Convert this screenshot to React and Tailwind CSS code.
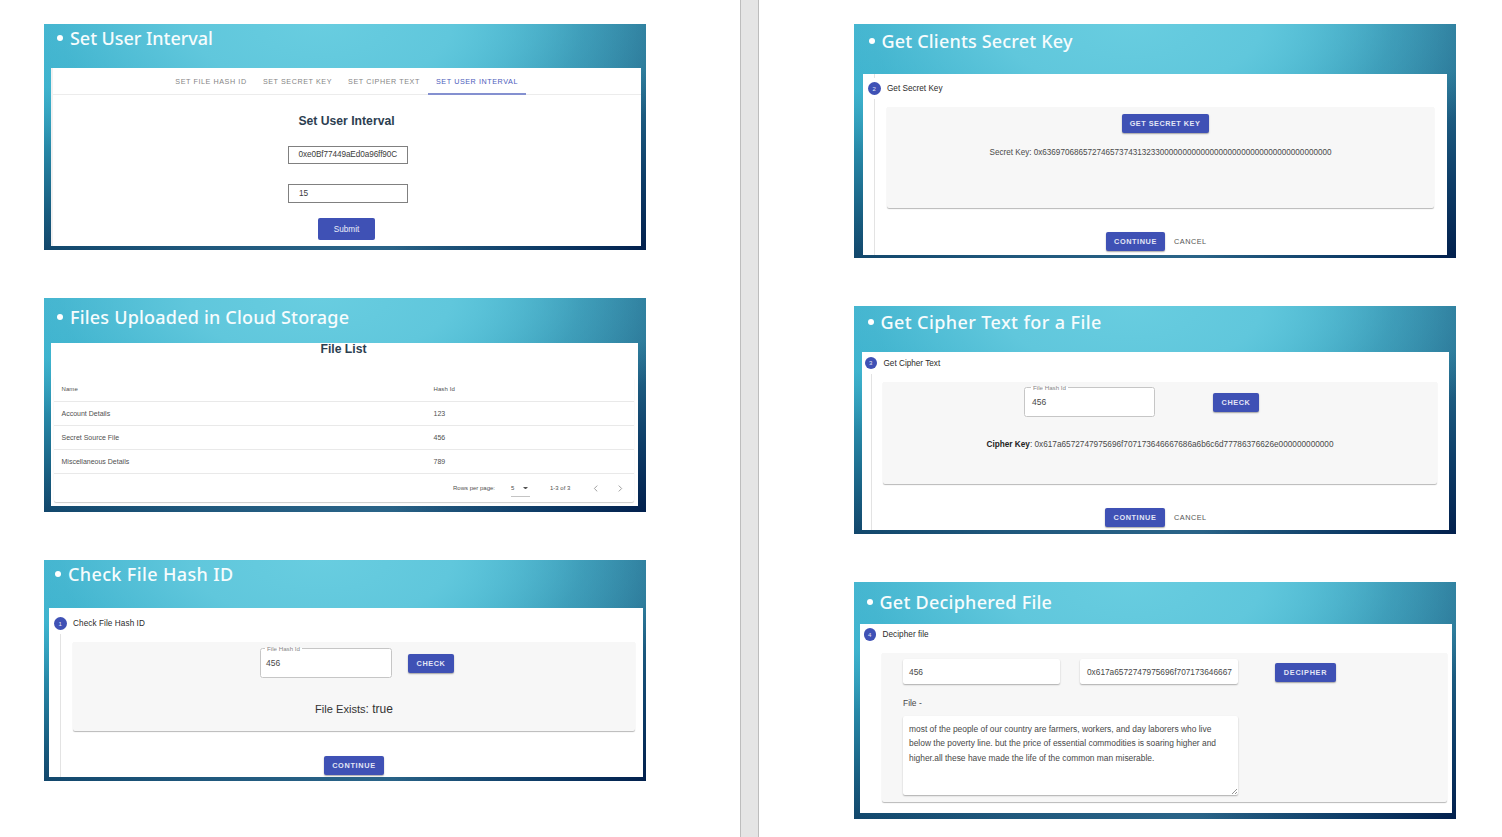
import React from "react";

const slideBg =
  "bg-[radial-gradient(ellipse_62%_80%_at_46%_0%,#68cde0_0%,#60c7dc_35%,#58bed566_70%,transparent_100%),radial-gradient(ellipse_42%_80%_at_100%_100%,#02204d_0%,#07305dcc_40%,transparent_100%),radial-gradient(ellipse_60%_40%_at_55%_100%,#2a6488_0%,#2a648899_50%,transparent_100%),linear-gradient(100deg,transparent_62%,#276f90_97%),linear-gradient(to_bottom,#3cb2ce_0%,#35b0cc_28%,#2480a0_60%,#0f4368_100%)]";

function Slide({ title, height, titleClass, panelClass, children }) {
  return (
    <section className={`${slideBg} ${height} flex w-[602px] shrink-0 flex-col overflow-hidden`}>
      <h2 className={`flex items-center whitespace-nowrap font-['Noto_Sans',sans-serif] text-[18px] font-medium leading-none text-[#f6fcfd] ${titleClass}`}>
        <span className="mr-[7px] size-[6px] rounded-full bg-white" />
        {title}
      </h2>
      <div className={`flex shrink-0 flex-col overflow-hidden bg-white ${panelClass}`}>{children}</div>
    </section>
  );
}

function Button({ className = "", children }) {
  return (
    <button
      className={`flex h-[19px] shrink-0 items-center justify-center whitespace-nowrap rounded-[2px] bg-[#3f51b5] text-[7.3px] font-bold leading-none text-[#e3e6f5] shadow-[0_1px_1.5px_rgba(0,0,0,0.35)] ${className}`}
    >
      {children}
    </button>
  );
}

function Step({ n, label, className = "" }) {
  return (
    <div className={`flex h-[13px] shrink-0 items-center text-[8.2px] leading-none text-[#2b2b2b] ${className}`}>
      <span className="mr-[6.5px] flex size-[12.5px] items-center justify-center rounded-full bg-[#3f51b5] text-[6px] text-[#e4e7f6]">{n}</span>
      <span className="pt-[1.5px]">{label}</span>
    </div>
  );
}

const card = "shrink-0 rounded-b-[2px] bg-[#f7f7f7] shadow-[0_1px_1px_rgba(0,0,0,0.28)]";
const field = "rounded-[2px] bg-white shadow-[0_1px_1.5px_rgba(0,0,0,0.3)]";

function HashField({ className }) {
  return (
    <fieldset className={`shrink-0 rounded-[2.5px] border border-[#c6c6c6] bg-white px-[5px] ${className}`}>
      <legend className="-ml-px h-[4px] px-[2px] text-[6.2px] leading-[6px] text-[#858585]">
        File Hash Id
      </legend>
      <div className="pt-[8px] text-[8.5px] leading-[10px] text-[#484848]">456</div>
    </fieldset>
  );
}

function Tabs() {
  return (
    <div className="flex h-[27px] shrink-0 border-b border-[#ececec] pl-[114px] text-[7.2px] leading-[28px] tracking-[0.57px] text-[#858585]">
      <div className="w-[88px] text-center">SET FILE HASH ID</div>
      <div className="w-[85px] text-center">SET SECRET KEY</div>
      <div className="w-[88px] text-center">SET CIPHER TEXT</div>
      <div className="h-[27px] w-[98px] border-b-2 border-[#8490d0] text-center text-[#4d5cbb]">SET USER INTERVAL</div>
    </div>
  );
}

const rows = [
  ["Account Details", "123"],
  ["Secret Source File", "456"],
  ["Miscellaneous Details", "789"],
];

function FileTable() {
  return (
    <div className="ml-[3px] mt-[20px] flex h-[125px] w-[580px] shrink-0 flex-col rounded-[2px] text-[7px] text-[#505050] shadow-[0_1px_1px_rgba(0,0,0,0.2)]">
      <div className="flex h-[24.5px] shrink-0 items-center border-b border-[#e9e9e9] pl-[7.5px] pt-[1.5px] text-[6px] font-medium">
        <span className="w-[372px] tracking-[0.1px]">Name</span>
        <span className="tracking-[0.1px]">Hash Id</span>
      </div>
      {rows.map(([name, id]) => (
        <div key={id} className="flex h-[24.2px] shrink-0 items-center border-b border-[#e9e9e9] pl-[7.5px] pt-[1.5px]">
          <span className="w-[372px]">{name}</span>
          <span>{id}</span>
        </div>
      ))}
      <div className="flex h-[28px] items-center pl-[399px] pt-[1px] text-[6px]">
        <span className="w-[58px]">Rows per page:</span>
        <span className="flex h-[17px] w-[19px] items-center justify-between border-b border-[#c4c4c4] pr-[2.5px]">
          5
          <svg viewBox="0 0 6 3" className="h-[2.5px] w-[5px] fill-[#555]"><path d="M0 0h6L3 3z" /></svg>
        </span>
        <span className="ml-[20px] w-[43px]">1-3 of 3</span>
        <svg viewBox="0 0 4 6" className="h-[7px] w-[5px] fill-none stroke-[#999] stroke-[0.8]"><path d="M3.5.5 1 3l2.5 2.5" /></svg>
        <svg viewBox="0 0 4 6" className="ml-[20px] h-[7px] w-[5px] fill-none stroke-[#999] stroke-[0.8]"><path d="M.5.5 3 3 .5 5.5" /></svg>
      </div>
    </div>
  );
}

export default function App() {
  return (
    <div className="flex h-[837px] w-[1502px] overflow-hidden bg-white font-['Liberation_Sans',Arial,sans-serif]">
      <main className="flex w-[740px] shrink-0 flex-col gap-[48px] pl-[44px] pt-[24px]">
        <Slide title="Set User Interval" height="h-[226px]" titleClass="h-[44px] pb-[17px] pl-[13px] tracking-[-0.05px]" panelClass="ml-[7px] h-[178px] w-[590px] border-l-2 border-[#f1f1f1]">
          <Tabs />
          <h3 className="mt-[20px] pr-px text-center text-[12.2px] font-bold leading-[13px] text-[#2c3e50]">Set User Interval</h3>
          <div className="ml-[235px] mt-[18px] flex h-[18px] w-[120px] shrink-0 items-center whitespace-nowrap border border-[#808080] px-[9.5px] text-[8.2px] tracking-[-0.08px] text-[#3c3c3c]">
            0xe0Bf77449aEd0a96ff90C
          </div>
          <div className="ml-[235px] mt-[20px] flex h-[19px] w-[120px] shrink-0 items-center border border-[#808080] px-[10px] text-[8.3px] text-[#3c3c3c]">15</div>
          <div className="ml-[265px] mt-[15px] flex h-[22px] w-[57px] shrink-0 items-center justify-center rounded-[2px] bg-[#3f51b5] pt-[2px] text-[8.2px] text-[#eceefa]">Submit</div>
        </Slide>

        <Slide title="Files Uploaded in Cloud Storage" height="h-[214px]" titleClass="h-[45px] pb-[8px] pl-[13px] tracking-[0.2px]" panelClass="ml-[7px] h-[163px] w-[587px]">
          <h3 className="h-[14px] shrink-0 pr-[2px] text-center text-[12.2px] font-bold leading-[13px] text-[#2c3e50]">File List</h3>
          <FileTable />
        </Slide>

        <Slide title="Check File Hash ID" height="h-[221px]" titleClass="h-[48px] pb-[21px] pl-[11px] tracking-[0.37px]" panelClass="ml-[5px] h-[169px] w-[594px]">
          <Step n="1" label="Check File Hash ID" className="ml-[5px] mt-[9px] tracking-[0.08px]" />
          <div className="ml-[11px] mt-[4px] flex h-[143px] shrink-0 flex-col border-l border-[#e3e3e3] pl-[12px]">
            <div className={`${card} mt-[8px] h-[89px] w-[562px]`}>
              <div className="flex pl-[187px] pt-[4px]">
                <HashField className="h-[32px] w-[132px]" />
                <Button className="ml-[16px] mt-[8px] w-[46px] tracking-[0.6px]">CHECK</Button>
              </div>
              <p className="mt-[24px] text-center text-[11.1px] leading-[14px] text-[#333]">
                File Exists<span className="text-[12px]">: true</span>
              </p>
            </div>
            <Button className="ml-[251px] mt-[25px] w-[60px] tracking-[0.7px]">CONTINUE</Button>
          </div>
        </Slide>
      </main>

      <div className="w-[19px] shrink-0 border-x border-[#bdbdbd] bg-[#e5e5e5]" />

      <main className="flex w-[743px] shrink-0 flex-col gap-[48px] pl-[95px] pt-[24px]">
        <Slide title="Get Clients Secret Key" height="h-[234px]" titleClass="h-[50px] pb-[16px] pl-[14.5px] tracking-[0.18px]" panelClass="ml-[9px] h-[181px] w-[584px]">
          <div className="ml-[11px] h-[4px] w-px shrink-0 bg-[#e3e3e3]" />
          <Step n="2" label="Get Secret Key" className="ml-[5px] mt-[4px]" />
          <div className="ml-[11px] mt-[4px] flex h-[160px] shrink-0 flex-col border-l border-[#e3e3e3] pl-[12px]">
            <div className={`${card} mt-[8px] flex h-[101px] w-[547px] flex-col items-center`}>
              <Button className="ml-[9px] mt-[7px] w-[87px] tracking-[0.5px]">GET SECRET KEY</Button>
              <p className="mt-[14px] whitespace-nowrap text-[8.13px] leading-[12px] text-[#4a4a4a]">
                Secret Key: 0x6369706865727465737431323300000000000000000000000000000000000000
              </p>
            </div>
            <div className="mt-[24px] flex items-center pl-[219px]">
              <Button className="w-[59px] tracking-[0.6px]">CONTINUE</Button>
              <span className="ml-[9px] text-[7.3px] leading-none tracking-[0.5px] text-[#555]">CANCEL</span>
            </div>
          </div>
        </Slide>

        <Slide title="Get Cipher Text for a File" height="h-[228px]" titleClass="h-[46px] pb-[14px] pl-[13.5px] tracking-[0.4px]" panelClass="ml-[8px] h-[178px] w-[587px]">
          <Step n="3" label="Get Cipher Text" className="ml-[2.5px] mt-[4.5px]" />
          <div className="ml-[8.5px] mt-[4.5px] flex h-[160px] shrink-0 flex-col border-l border-[#e3e3e3] pl-[11.5px]">
            <div className={`${card} mt-[8px] h-[102px] w-[554px]`}>
              <div className="flex pl-[141px] pt-[3px]">
                <HashField className="h-[32px] w-[131px] pl-[7px]" />
                <Button className="ml-[58px] mt-[8px] w-[46px] tracking-[0.6px]">CHECK</Button>
              </div>
              <p className="mt-[21.5px] whitespace-nowrap text-center text-[8.24px] leading-[12px] text-[#4a4a4a]">
                <b className="text-[#222]">Cipher Key</b>: 0x617a6572747975696f707173646667686a6b6c6d77786376626e000000000000
              </p>
            </div>
            <div className="mt-[24px] flex items-center pl-[222px]">
              <Button className="w-[60px] tracking-[0.6px]">CONTINUE</Button>
              <span className="ml-[9px] text-[7.3px] leading-none tracking-[0.5px] text-[#555]">CANCEL</span>
            </div>
          </div>
        </Slide>

        <Slide title="Get Deciphered File" height="h-[237px]" titleClass="h-[42px] pb-[3px] pl-[12.5px] tracking-[0.25px]" panelClass="ml-[6px] h-[189px] w-[592px]">
          <Step n="4" label="Decipher file" className="ml-[3.5px] mt-[4px] tracking-[0.05px]" />
          <div className={`${card} ml-[22px] mt-[12px] h-[149px] w-[565px] pl-[21px] pt-[6px] text-[8.41px] text-[#484848]`}>
            <div className="flex">
              <div className={`flex h-[25px] w-[157px] items-center pl-[6px] pt-[1.5px] ${field}`}>456</div>
              <div className={`ml-[20px] flex h-[25px] w-[158px] items-center whitespace-nowrap pl-[7px] pt-[1.5px] text-[8.3px] ${field}`}>
                0x617a6572747975696f707173646667
              </div>
              <Button className="ml-[37px] mt-[4px] w-[61px] tracking-[0.7px]">DECIPHER</Button>
            </div>
            <div className="mt-[13px] leading-[12px]">File -</div>
            <div className={`mt-[7px] flex h-[79px] w-[335px] flex-col whitespace-nowrap pl-[6px] pt-[5.5px] leading-[14.6px] ${field}`}>
              <span>most of the people of our country are farmers, workers, and day laborers who live</span>
              <span>below the poverty line. but the price of essential commodities is soaring higher and</span>
              <span>higher.all these have made the life of the common man miserable.</span>
              <svg viewBox="0 0 5 5" className="mb-[1px] mr-[1px] mt-auto size-[5px] self-end fill-none stroke-[#666] stroke-[0.7]"><path d="M0 5 5 0M3 5l2-2" /></svg>
            </div>
          </div>
        </Slide>
      </main>
    </div>
  );
}
